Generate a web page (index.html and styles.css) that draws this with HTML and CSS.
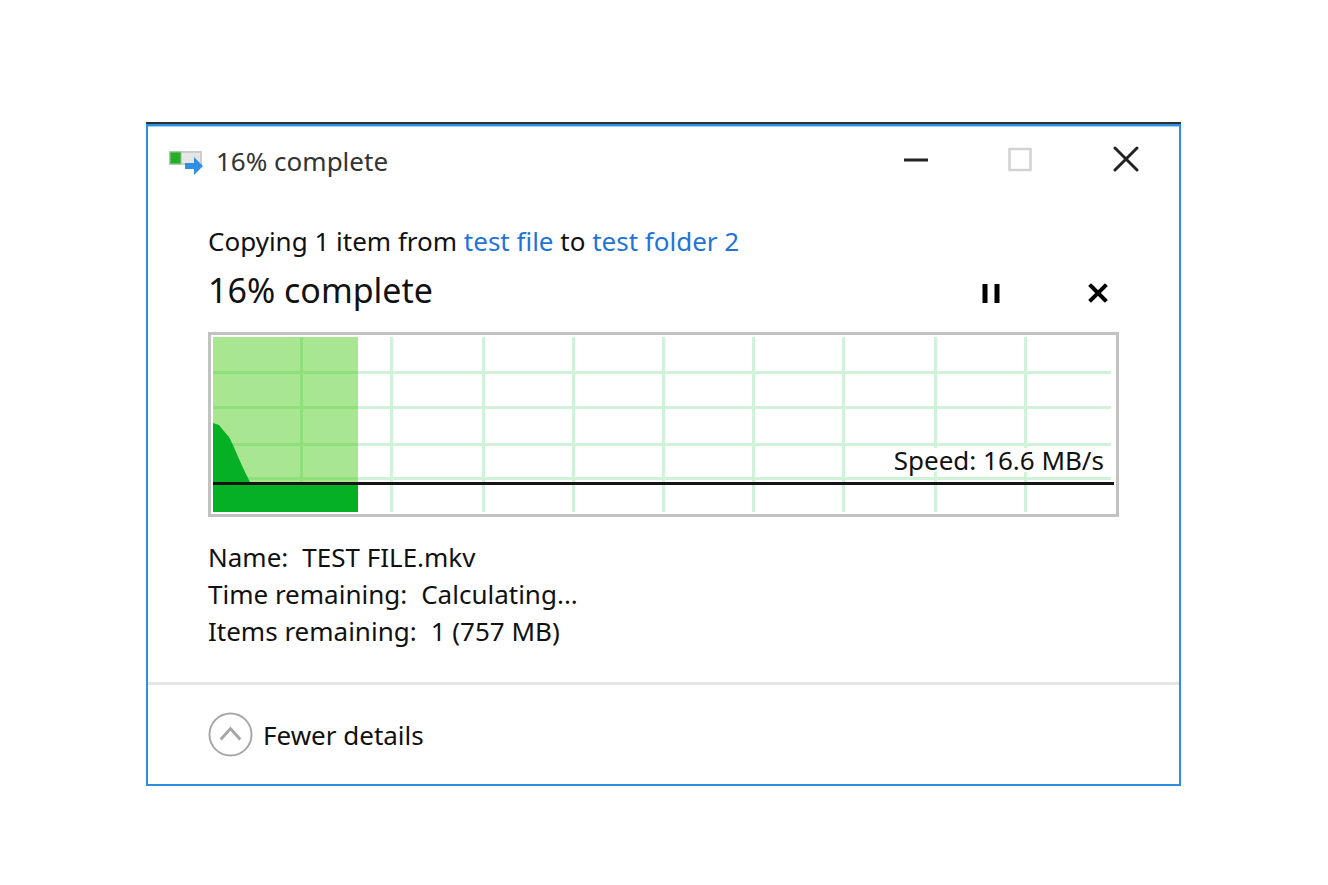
FILE: index.html
```html
<!DOCTYPE html>
<html lang="en">
<head>
<meta charset="utf-8">
<meta name="viewport" content="width=device-width, initial-scale=1">
<title>16% complete</title>
<link rel="stylesheet" href="styles.css">
</head>
<body>
<main class="dialog">
  <header class="titlebar">
    <svg class="app-icon" viewBox="0 0 36 28" aria-hidden="true">
      <rect x="2" y="5" width="31" height="12" fill="#e6e6e6" stroke="#cdcdcd" stroke-width="2"/>
      <rect x="2" y="5" width="11" height="12" fill="#27ad2b" stroke="#8cc98e"/>
      <path d="M17 16h9V10l9 9-9 9v-6h-9z" fill="#2f8fe0"/>
    </svg>
    <h1 class="title">16% complete</h1>
    <div class="window-buttons">
      <button class="icon-button" type="button" aria-label="Minimize"><svg viewBox="0 0 26 26"><path d="M1 14h24" stroke="#222" stroke-width="3"/></svg></button>
      <button class="icon-button" type="button" aria-label="Maximize" disabled><svg viewBox="0 0 26 26"><path d="M1.500 3h21v21h-21z" fill="none" stroke="#d2d2d2" stroke-width="2.500"/></svg></button>
      <button class="icon-button" type="button" aria-label="Close"><svg viewBox="0 0 26 26"><path d="M2 2l22 22M24 2L2 24" stroke="#222" stroke-width="3" stroke-linecap="round"/></svg></button>
    </div>
  </header>
  <section class="content">
    <p class="summary">Copying 1 item from <a href="#source">test file</a> to <a href="#target">test folder 2</a></p>
    <div class="status-row">
      <h2 class="status">16% complete</h2>
      <div class="actions">
        <button class="icon-button" type="button" aria-label="Pause"><svg viewBox="0 0 26 26"><path d="M7 4v19M19 4v19" stroke="#000" stroke-width="5"/></svg></button>
        <button class="icon-button" type="button" aria-label="Cancel"><svg viewBox="0 0 26 26"><path d="M6 6l14 14M20 6L6 20" stroke="#000" stroke-width="4" stroke-linecap="square"/></svg></button>
      </div>
    </div>
    <div class="chart">
      <svg class="graph" viewBox="0 0 905 179" preserveAspectRatio="none" role="img" aria-label="Transfer speed graph">
        <path d="M2 37.500h898M2 72.500h898M2 109.500h898M2 143.500h898M90.500 2v175M180.500 2v175M272.500 2v175M362.500 2v175M452.500 2v175M542.500 2v175M632.500 2v175M724.500 2v175M814.500 2v175" fill="none" stroke="#d0f2d8" stroke-width="3"/>
        <rect x="2" y="2" width="145" height="175" fill="#a8e691"/>
        <path d="M2 37.500h145M2 72.500h145M2 109.500h145M2 143.500h145M90.500 2v175" fill="none" stroke="#8fdf7c" stroke-width="3"/>
        <path d="M2 88l6 2 4 5 6 7 4 8 6 14 5 11 6 12V148h108v29H2z" fill="#06b025"/>
      </svg>
      <span class="speed">Speed: 16.6 MB/s</span>
      <svg class="graph average" viewBox="0 0 905 179" preserveAspectRatio="none" aria-hidden="true">
        <path d="M2 148.500h901" stroke="#151515" stroke-width="3"/>
      </svg>
    </div>
    <dl class="details">
      <div class="detail"><dt>Name:</dt><dd>TEST FILE.mkv</dd></div>
      <div class="detail"><dt>Time remaining:</dt><dd>Calculating...</dd></div>
      <div class="detail"><dt>Items remaining:</dt><dd>1 (757 MB)</dd></div>
    </dl>
  </section>
  <footer class="footer">
    <button class="toggle" type="button">
      <svg class="toggle-icon" viewBox="0 0 46 46" aria-hidden="true"><circle cx="23" cy="23" r="21.500" fill="none" stroke="#a6a6a6" stroke-width="2"/><path d="M13 28l10-11 10 11" fill="none" stroke="#a6a6a6" stroke-width="3"/></svg>
      <span>Fewer details</span>
    </button>
  </footer>
</main>
</body>
</html>
```

FILE: styles.css
```css
* { box-sizing: border-box; }

body {
  margin: 0;
  padding: 122px 147px 98px 146px;
  background: #fff;
  color: #111;
  font: 26px/36px "Noto Sans", "Open Sans", sans-serif;
}

h1, h2, p, dl, dd { margin: 0; font-weight: 400; }

button {
  padding: 0;
  border: 0;
  background: none;
  color: inherit;
  font: inherit;
}

.dialog {
  position: relative;
  margin-top: 2px;
  border: 2px solid #2f8fde;
  box-shadow: inset 0 1px #a3d0f5;
}

.dialog::before {
  content: "";
  position: absolute;
  inset: -4px -2px auto;
  height: 2px;
  background: #26343f;
}

.titlebar {
  display: flex;
  align-items: center;
  height: 69px;
  padding: 0 40px 0 20px;
}

.app-icon { width: 36px; height: 28px; }

.title {
  margin-left: 12px;
  color: #333;
  font-size: 26px;
  line-height: 36px;
}

.window-buttons {
  display: flex;
  gap: 79px;
  margin-left: auto;
  padding-bottom: 4px;
}

.icon-button { width: 26px; height: 26px; }

.icon-button svg { display: block; width: 26px; height: 26px; }

.content { padding: 28px 60px 32px; }

.summary a { color: #1f74d8; text-decoration: none; }

.status-row {
  display: flex;
  align-items: center;
  justify-content: space-between;
  height: 50px;
  margin: 6px 0 17px;
}

.status { font-size: 34px; line-height: 48px; }

.actions { display: flex; gap: 81px; padding: 6px 8px 0 0; }

.chart {
  position: relative;
  height: 185px;
  border: 3px solid #c2c2c2;
}

.graph { display: block; width: 100%; height: 100%; }

.average { position: absolute; inset: 0; }

.speed {
  position: absolute;
  right: 12px;
  bottom: 42px;
  background: #fff;
  line-height: 24px;
}

.details { margin-top: 22px; }

.detail { display: flex; gap: 14px; line-height: 37px; }

.footer {
  padding: 27px 60px 27px;
  border-top: 3px solid #e5e5e5;
}

.toggle { display: flex; align-items: center; gap: 10px; }

.toggle-icon { width: 45px; height: 45px; }
```
